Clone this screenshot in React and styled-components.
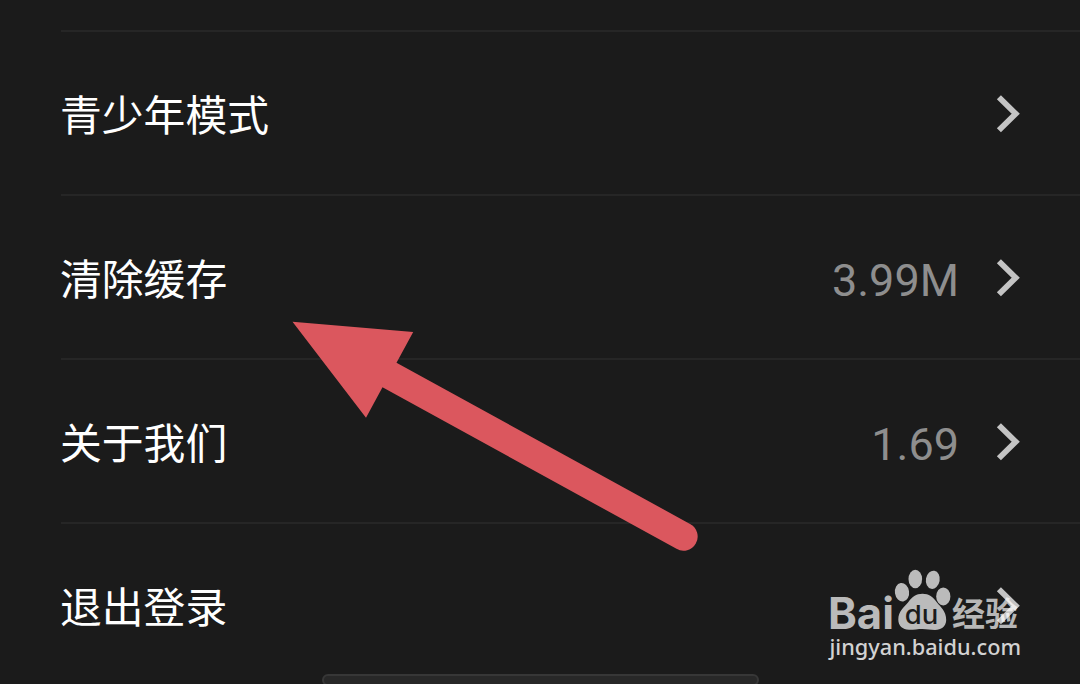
import styled, { createGlobalStyle } from 'styled-components';

const items = [
  { label: '青少年模式' },
  { label: '清除缓存', value: '3.99M' },
  { label: '关于我们', value: '1.69' },
  { label: '退出登录' },
];

const App = () => {
  return (
    <>
      <GlobalStyle />
      <Screen>
        <List>
          {items.map((item) => (
            <Row key={item.label}>
              <Label>{item.label}</Label>
              <Side>
                {item.value && <Value>{item.value}</Value>}
                <Chevron viewBox='0 0 26 40'>
                  <path d='M3.9 4.2 L20.7 20.7 L3.9 37.2' />
                </Chevron>
              </Side>
            </Row>
          ))}
        </List>
        <HomeBar />
        <Arrow viewBox='0 0 430 250'>
          <path d='M12.5 11.8 L133.2 22 L116.5 52.8 L410.5 214.2 A13.6 13.6 0 0 1 396.5 238.8 L102.5 77.3 L86 107.8 Z' />
        </Arrow>
        <Watermark />
      </Screen>
    </>
  );
};

const Watermark = () => (
  <Mark viewBox='0 0 230 110'>
    <g fill='#fff' fillOpacity='0.7'>
      <ellipse cx='92' cy='32.3' rx='7.1' ry='9.3' transform='rotate(-8 92 32.3)' />
      <ellipse cx='105.3' cy='19' rx='6.8' ry='9.3' />
      <ellipse cx='122.8' cy='19.8' rx='6.9' ry='9.2' transform='rotate(10 122.8 19.8)' />
      <ellipse cx='133.3' cy='36.4' rx='7.1' ry='9' />
      <path d='M112.5 33.8 C119 33.8 123 37 127 42.5 C130.5 47 136.2 51 136.2 60 C136.2 66.5 131 70 125 70 C120 70 117 69 112.5 69 C108 69 104 69.8 99 69.8 C92.5 69.8 88.3 65.5 88.3 59.5 C88.3 51 94 47.5 98 42.5 C102 37 106 33.8 112.5 33.8 Z' />
      <CnText x='142' y='66' textLength='66' lengthAdjust='spacingAndGlyphs'>
        经验
      </CnText>
    </g>
    <LogoText x='18' y='68.5' textLength='66' lengthAdjust='spacingAndGlyphs'>
      Bai
    </LogoText>
    <DuText x='94.8' y='63.5' textLength='33.5' lengthAdjust='spacingAndGlyphs'>
      du
    </DuText>
    <UrlText x='19.5' y='94.5' textLength='191.5' lengthAdjust='spacingAndGlyphs'>
      jingyan.baidu.com
    </UrlText>
  </Mark>
);

const GlobalStyle = createGlobalStyle`
  * {
    box-sizing: border-box;
  }

  body {
    margin: 0;
    background: #1b1b1b;
  }
`;

const Screen = styled.main`
  position: relative;
  display: flex;
  flex-direction: column;
  width: 1080px;
  height: 684px;
  overflow: hidden;
  background: #1b1b1b;
`;

//List
const List = styled.div`
  flex: none;
  height: 674px;
  padding: 30px 0 0 61px;
  overflow: hidden;
`;

const Row = styled.div`
  display: flex;
  justify-content: space-between;
  align-items: center;
  height: 164px;
  padding-right: 56px;
  border-top: 2px solid #262626;
`;

const Label = styled.span`
  margin-left: -1px;
  font-family: 'Noto Sans CJK SC', sans-serif;
  font-size: 41.8px;
  line-height: 60px;
  color: #fff;
`;

const Side = styled.div`
  display: flex;
  align-items: center;
`;

const Value = styled.span`
  margin-right: 36px;
  padding-top: 7px;
  font-family: Roboto, sans-serif;
  font-size: 45px;
  font-weight: 400;
  line-height: 60px;
  color: #8e8e8e;
`;

const Chevron = styled.svg`
  width: 26px;
  height: 40px;
  margin-right: 3px;
  fill: none;
  stroke: #c4c4c4;
  stroke-width: 5.8;
`;

const HomeBar = styled.div`
  flex: none;
  align-self: center;
  width: 437px;
  height: 12px;
  border: 2px solid #373737;
  border-radius: 6px;
  background: #282828;
`;

//Overlays
const Arrow = styled.svg`
  position: absolute;
  left: 280px;
  top: 310px;
  width: 430px;
  height: 250px;
  fill: #db575e;
`;

const Mark = styled.svg`
  position: absolute;
  left: 810px;
  top: 560px;
  width: 230px;
  height: 110px;
`;

const LogoText = styled.text`
  font-family: Inter, sans-serif;
  font-size: 43.5px;
  font-weight: bold;
  fill: #bababa;
`;

const CnText = styled.text`
  font-family: 'Noto Sans CJK SC', sans-serif;
  font-size: 33px;
  font-weight: bold;
`;

const DuText = styled.text`
  font-family: Inter, sans-serif;
  font-size: 26px;
  font-weight: 500;
  fill: #1b1b1b;
`;

const UrlText = styled.text`
  font-family: 'Noto Sans', sans-serif;
  font-size: 22.5px;
  font-weight: 500;
  fill: #d2d2d2;
`;

export default App;
